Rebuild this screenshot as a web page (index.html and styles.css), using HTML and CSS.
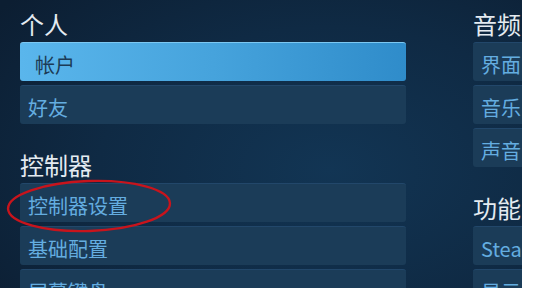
FILE: index.html
```html
<!DOCTYPE html>
<html lang="zh-CN">

<head>
  <meta charset="UTF-8">
  <meta name="viewport" content="width=device-width, initial-scale=1.0">
  <title>设置</title>
  <link rel="stylesheet" href="styles.css">
</head>

<body>
  <div class="screen">
    <div class="column">
      <h2 class="section-title">个人</h2>
      <div class="item active">帐户</div>
      <div class="item">好友</div>

      <h2 class="section-title spaced">控制器</h2>
      <div class="item">控制器设置</div>
      <div class="item">基础配置</div>
      <div class="item">屏幕键盘</div>
    </div>

    <div class="column">
      <h2 class="section-title">音频</h2>
      <div class="item">界面</div>
      <div class="item">音乐</div>
      <div class="item">声音</div>

      <h2 class="section-title spaced">功能</h2>
      <div class="item">Steam 按键</div>
      <div class="item">显示</div>
    </div>

    <!-- red marker circled on the screenshot -->
    <svg class="marker" width="170" height="58" viewBox="0 0 170 58">
      <ellipse cx="84" cy="28" rx="81" ry="25" fill="none" stroke="#c8141c" stroke-width="2.4" transform="rotate(-2 84 28)" />
    </svg>
  </div>
</body>

</html>
```

FILE: styles.css
```css
body {
  margin: 0;
  padding: 0;
  background-color: #ffffff;
  font-family: "Noto Sans CJK SC", "Noto Sans", sans-serif;
}

.screen {
  position: relative;
  width: 522px;
  height: 288px;
  overflow: hidden;
  box-sizing: border-box;
  padding: 9px 0 0 20px;
  display: grid;
  grid-template-columns: 386px 120px;
  column-gap: 67px;
  background: radial-gradient(ellipse 420px 260px at 330px 170px, #123554 0%, #0f2a44 55%, #0c1e32 100%);
}

.column {
  display: flex;
  flex-direction: column;
}

.section-title {
  margin: 0 0 3px 0;
  height: 30px;
  font-size: 24px;
  line-height: 30px;
  font-weight: normal;
  color: #e4ebf1;
  white-space: nowrap;
}

.section-title.spaced {
  margin-top: 22px;
}

.item {
  flex-shrink: 0;
  height: 39px;
  margin-bottom: 4px;
  padding-left: 8px;
  box-sizing: border-box;
  border-radius: 3px;
  background-color: #1b3c58;
  border-top: 1px solid #22476a;
  color: #64ade0;
  font-size: 20px;
  line-height: 44px;
  white-space: nowrap;
  overflow: hidden;
}

.item.active {
  padding-left: 15px;
  background: linear-gradient(90deg, #5ab6ec 0%, #46a3dc 50%, #2f8cca 100%);
  border-top: 1px solid #7cc8f2;
  color: #1c3b56;
}

.marker {
  position: absolute;
  left: 5px;
  top: 178px;
}
```
